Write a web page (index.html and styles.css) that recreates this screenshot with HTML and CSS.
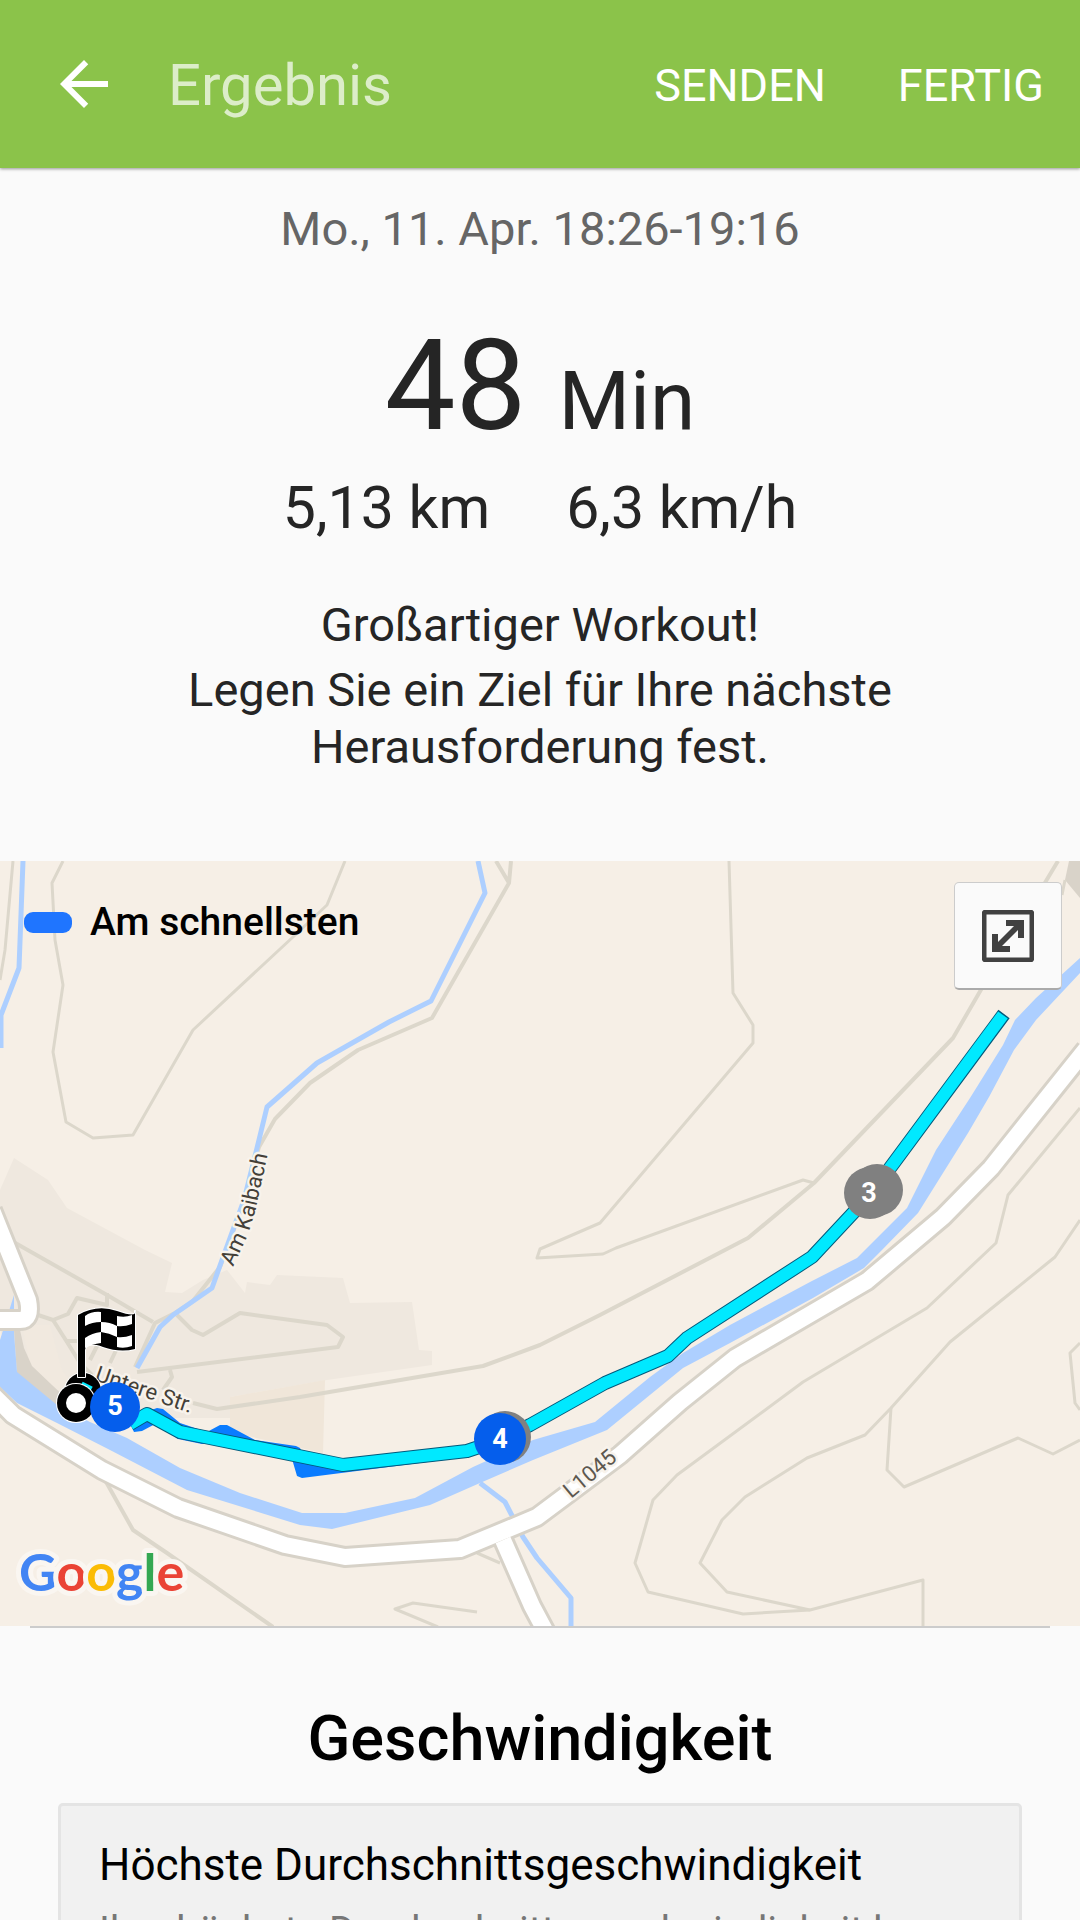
FILE: index.html
```html
<!DOCTYPE html>
<html lang="de">
<head>
    <meta charset="UTF-8">
    <meta name="viewport" content="width=device-width, initial-scale=1.0">
    <title>Ergebnis</title>
    <link rel="stylesheet" href="styles.css">
</head>
<body>

<header class="toolbar">
    <button class="back" aria-label="Zurück">
        <svg viewBox="0 0 24 24"><path d="M20 11H7.83l5.59-5.59L12 4l-8 8 8 8 1.41-1.41L7.83 13H20v-2z"/></svg>
    </button>
    <h1 class="title">Ergebnis</h1>
    <button class="action">SENDEN</button>
    <button class="action">FERTIG</button>
</header>

<main>
    <section class="summary">
        <p class="date">Mo., 11. Apr. 18:26-19:16</p>
        <p class="duration"><span class="minutes">48</span> <span class="unit">Min</span></p>
        <div class="stats">
            <span>5,13 km</span>
            <span>6,3 km/h</span>
        </div>
        <p class="praise">Großartiger Workout!</p>
        <p class="hint">Legen Sie ein Ziel für Ihre nächste Herausforderung fest.</p>
    </section>

    <section class="map">
        <svg class="map-canvas" viewBox="0 861 1080 765">
            <!-- built-up area -->
            <path class="area" d="M0 1190L14 1158 48 1180 67 1208 145 1250 172 1263 165 1292 182 1293 203 1280 227 1270 245 1293 247 1282 270 1285 277 1275 343 1278 350 1303 412 1302 419 1350 432 1351 432 1365 327 1380 230 1397 230 1418 160 1418 57 1405 17 1372 0 1330z"/>
            <path class="field" d="M230 1397L325 1380 323 1453 230 1432z"/>
            <path class="sand" d="M22 1325L50 1325 62 1370 85 1400 66 1400 45 1382 30 1366z"/>
            <path class="bank" d="M14 1330L20 1330 24 1348 32 1366 52 1385 68 1400 60 1410 17 1374z"/>
            <path class="bank" d="M1069 861H1080V898L1065 880z"/>

            <!-- footpaths and contour lines -->
            <g class="path">
                <path d="M13 861L5 950 0 980"/>
                <path d="M63 861L52 883 55 940 63 985 53 1052 66 1122 93 1138 133 1135 193 1030 293 937 327 905 345 861"/>
                <path d="M729 861L733 993 753 1025V1043L600 1223 540 1249 537 1258 603 1254 616 1248 803 1180 814 1183"/>
                <path d="M1080 1108L1008 1195 996 1243 927 1308 803 1382 677 1475 653 1500 635 1563 648 1592 743 1614 810 1610 923 1580V1627"/>
                <path d="M1080 1220L1055 1257 950 1342 891 1408 865 1435 807 1458 745 1497 722 1520 700 1563 727 1592 810 1610"/>
                <path d="M891 1408L887 1470 904 1487 1018 1438 1053 1454 1080 1440"/>
                <path d="M1080 1343L1070 1353 1075 1403 1080 1410M1065 880L1062 895"/>
                <path d="M477 1612L413 1603 395 1609 438 1627M477 1553L500 1563"/>
            </g>
            <g class="path wide">
                <path d="M511 861L509 883 432 1018 358 1050 310 1083 275 1119 259 1147 244 1200 232 1235 220 1267 192 1302 175 1313 155 1323 135 1367M496 861L509 883"/>
                <path d="M1058 861L982 988 953 1038 814 1183 748 1238 600 1315 540 1345 483 1366 300 1397 217 1409 193 1403"/>
                <path d="M105 1480L133 1530 167 1553 273 1627"/>
                <path d="M10 1240L107 1295 153 1322M38 1315L53 1320 67 1342 80 1363 92 1375M53 1320L68 1314 77 1298 107 1305V1293M65 1341H80M110 1363L127 1327M90 1360L100 1340"/>
                <path d="M177 1315L192 1330 203 1335 240 1313 327 1325 343 1337 338 1347 137 1372M170 1370L172 1377 163 1390"/>
            </g>

            <!-- water -->
            <g class="stream">
                <path d="M23 861L19 968 1 1015V1048"/>
                <path d="M478 861L485 893 431 1001 389 1022 317 1063 267 1107 257 1148 244 1200 234 1227 222 1260 212 1288 173 1315 160 1327 137 1368"/>
                <path d="M480 1483L505 1502 523 1537 537 1558 571 1598V1627"/>
            </g>
            <path class="river" d="M14 1295V1333L17 1372 57 1405 90 1422 127 1438 180 1468 240 1493 302 1513 345 1513 415 1498 473 1467 533 1440 595 1422 650 1377 683 1353 730 1325 810 1282 857 1258 907 1208 936 1150 970 1098 1003 1045 1015 1020 1036 998 1080 958V973L1036 1020 1014 1050 989 1097 968 1133 918 1213 882 1250 864 1268 813 1298 730 1343 683 1368 607 1430 533 1460 480 1483 430 1505 332 1529 300 1525 187 1490 110 1450 57 1423 17 1403 0 1387V1340z"/>

            <!-- roads -->
            <g class="casing">
                <path d="M503 1540L532 1606 548 1636"/>
                <path d="M-8 1210L28 1300Q32 1320 20 1320H-10"/>
                <path d="M-10 1392L13 1415 102 1470 178 1508 285 1545 345 1557 460 1549 537 1517 620 1455 680 1402 735 1358 867 1281 943 1217 991 1168 1086 1049"/>
            </g>
            <g class="road">
                <path d="M503 1540L532 1606 548 1636"/>
                <path d="M-8 1210L28 1300Q32 1320 20 1320H-10"/>
                <path d="M-10 1392L13 1415 102 1470 178 1508 285 1545 345 1557 460 1549 537 1517 620 1455 680 1402 735 1358 867 1281 943 1217 991 1168 1086 1049"/>
            </g>

            <!-- street names -->
            <path id="kaibach" class="guide" d="M233 1267L248 1235 255 1212 271 1140"/>
            <text class="street"><textPath href="#kaibach">Am Kaibach</textPath></text>
            <text class="street" transform="translate(94 1380) rotate(19)">Untere Str.</text>
            <text class="street number" transform="translate(571 1499) rotate(-40)">L1045</text>

            <!-- recorded route -->
            <path class="fastest" d="M137 1415L157 1408 163 1409 180 1423 207 1432 220 1425 227 1425 255 1440 296 1446 300 1448 304 1456 343 1460 467 1446V1457L302 1478 297 1476 292 1459 225 1441 202 1444 178 1439 157 1423 142 1431 134 1432 130 1424z"/>
            <path class="route-edge" d="M130 1424L147 1414 180 1432 343 1465 467 1451 500 1440 530 1425 605 1383 633 1371 668 1356 687 1338 812 1257 868 1197 890 1168 1004 1014"/>
            <path class="route" d="M130 1424L147 1414 180 1432 343 1465 467 1451 500 1440 530 1425 605 1383 633 1371 668 1356 687 1338 812 1257 868 1197 890 1168 1003 1015"/>

            <!-- kilometre markers -->
            <circle class="km-old" cx="870" cy="1193" r="26"/>
            <circle class="km-old" cx="877" cy="1190" r="26"/>
            <text class="km-text" x="869" y="1202">3</text>
            <circle class="km-old" cx="505" cy="1437" r="26"/>
            <circle class="km" cx="500" cy="1439" r="26"/>
            <text class="km-text" x="500" y="1448">4</text>

            <!-- start and finish -->
            <circle class="pin" cx="83" cy="1391" r="18"/>
            <path class="pin" d="M78 1315Q97 1304 117 1311T135 1311V1349Q120 1353 103 1347T85 1350V1377H78z"/>
            <path class="check" d="M85 1316Q92 1311 101 1312V1322Q92 1322 85 1326zM85 1338Q92 1333 101 1332V1343Q92 1344 85 1348zM101 1322Q110 1322 117 1326V1337Q109 1333 101 1332zM117 1316Q125 1318 132 1315V1324Q124 1327 117 1326zM117 1337Q124 1338 132 1335V1346Q124 1349 117 1347z"/>
            <path class="route" d="M80 1387L90 1392"/>
            <circle class="pin" cx="76" cy="1403" r="19"/>
            <circle class="check" cx="76" cy="1403" r="10"/>
            <circle class="km" cx="115" cy="1407" r="25"/>
            <text class="km-text" x="115" y="1415">5</text>

            <text class="google" x="19" y="1591"><tspan class="g-blue">G</tspan><tspan class="g-red">o</tspan><tspan class="g-yellow">o</tspan><tspan class="g-blue">g</tspan><tspan class="g-green">l</tspan><tspan class="g-red">e</tspan></text>
        </svg>
        <div class="legend"><span class="swatch"></span>Am schnellsten</div>
        <button class="expand" aria-label="Karte vergrößern">
            <svg viewBox="0 0 52 52">
                <rect x="2" y="2" width="48" height="48" rx="2"/>
                <path d="M24 10H42V28H36V20L20 36H28V42H10V24H16V32L32 16H24z"/>
            </svg>
        </button>
    </section>

    <section class="speed">
        <h2>Geschwindigkeit</h2>
        <div class="card">
            <h3>Höchste Durchschnittsgeschwindigkeit</h3>
            <p>Ihre höchste Durchschnittsgeschwindigkeit b</p>
        </div>
    </section>
</main>

</body>
</html>
```
FILE: styles.css
```css
* {
    box-sizing: border-box;
}
body {
    margin: 0;
    height: 100vh;
    overflow: hidden;
    font-family: Roboto, sans-serif;
    background-color: #fafafa;
    color: #252525;
}
h1, h2, h3, p {
    margin: 0;
    font-weight: 400;
}
button {
    padding: 0;
    border: none;
    background: none;
    font-family: inherit;
    cursor: pointer;
}

/* toolbar */
.toolbar {
    display: flex;
    align-items: center;
    padding: 48px 36px 48px 48px;
    background-color: #8bc34a;
    color: #fff;
    box-shadow: 0 1px 3px rgba(0, 0, 0, 0.4);
}
.back {
    width: 72px;
    height: 72px;
}
.back svg {
    display: block;
    fill: #fff;
}
.title {
    flex: 1;
    margin-left: 48px;
    padding-top: 2px;
    font-size: 58px;
    line-height: 70px;
    color: rgba(255, 255, 255, 0.7);
}
.action {
    margin-left: 72px;
    padding-top: 2px;
    font-size: 45px;
    color: #fff;
}

/* summary */
.summary {
    padding: 33px 0 86px;
    text-align: center;
}
.date {
    font-size: 47px;
    line-height: 56px;
    color: #666;
}
.duration {
    display: flex;
    justify-content: center;
    align-items: baseline;
    gap: 32px;
    margin-top: 49px;
}
.minutes {
    font-size: 126px;
    line-height: 160px;
}
.unit {
    font-size: 82px;
    line-height: 96px;
}
.stats {
    display: flex;
    justify-content: center;
    gap: 76px;
    margin-top: 6px;
    font-size: 59px;
    line-height: 72px;
}
.praise, .hint {
    font-size: 47px;
    line-height: 57px;
}
.praise {
    margin-top: 52px;
}
.hint {
    max-width: 800px;
    margin: 8px auto 0;
}

/* map */
.map {
    position: relative;
}
.map-canvas {
    display: block;
    width: 100%;
    background-color: #f6efe6;
    stroke-linejoin: round;
}
.area {
    fill: #efe8df;
}
.field {
    fill: #f0e6d9;
}
.sand {
    fill: #f1e9df;
}
.bank {
    fill: #d9d3c9;
}
.path, .stream, .casing, .road, .guide {
    fill: none;
}
.path {
    stroke: #dcd7cb;
    stroke-width: 3;
}
.wide {
    stroke-width: 4;
}
.stream {
    stroke: #adcfff;
    stroke-width: 5;
}
.river {
    fill: #adcfff;
}
.casing {
    stroke: #d7d2c8;
    stroke-width: 22;
}
.road {
    stroke: #fff;
    stroke-width: 16;
}
.street {
    font-size: 22px;
    fill: #443f38;
    stroke: #f8f3ec;
    stroke-width: 5;
    paint-order: stroke;
}
.number {
    fill: #5c574f;
}
.fastest {
    fill: #0a7cff;
}
.route-edge, .route {
    fill: none;
    stroke: #005a7c;
    stroke-width: 14;
}
.route {
    stroke: #00e9ff;
    stroke-width: 12;
}
.km-old {
    fill: #808080;
}
.km {
    fill: #055eec;
}
.km-text {
    font-size: 27px;
    font-weight: 700;
    text-anchor: middle;
    fill: #fff;
}
.pin {
    fill: #000;
    stroke: #fff;
    stroke-width: 2;
    paint-order: stroke;
}
.check {
    fill: #fff;
}
.google {
    font-family: Lato, sans-serif;
    font-size: 52px;
    font-weight: 700;
    stroke: #faf6f1;
    stroke-width: 10;
    paint-order: stroke;
}
.g-blue {
    fill: #4285f4;
}
.g-red {
    fill: #ea4335;
}
.g-yellow {
    fill: #fbbc05;
}
.g-green {
    fill: #34a853;
}
.legend {
    position: absolute;
    top: 38px;
    left: 24px;
    display: flex;
    align-items: center;
    gap: 18px;
    font-size: 39px;
    font-weight: 500;
    line-height: 46px;
    color: #000;
}
.swatch {
    width: 48px;
    height: 21px;
    border-radius: 9px;
    background-color: #1f75ff;
}
.expand {
    position: absolute;
    top: 21px;
    right: 18px;
    display: flex;
    align-items: center;
    justify-content: center;
    width: 108px;
    height: 108px;
    border: 1px solid #ccc;
    border-bottom: 2px solid #aaa;
    border-radius: 5px;
    background-color: #fafafa;
}
.expand svg {
    width: 52px;
    height: 52px;
    fill: #414141;
}
.expand rect {
    fill: none;
    stroke: #414141;
    stroke-width: 5;
}

/* speed */
.speed {
    margin: 0 30px;
    padding: 74px 28px 0;
    border-top: 2px solid #ccc;
}
.speed h2 {
    margin-bottom: 27px;
    font-size: 63px;
    font-weight: 500;
    line-height: 74px;
    text-align: center;
    color: #000;
}
.card {
    padding: 31px 38px;
    border: 3px solid #e4e4e4;
    border-radius: 5px;
    background-color: #f1f1f1;
}
.card h3 {
    font-size: 44px;
    line-height: 56px;
    color: #000;
}
.card p {
    margin-top: 15px;
    font-size: 40px;
    line-height: 48px;
    color: #777;
}
```
